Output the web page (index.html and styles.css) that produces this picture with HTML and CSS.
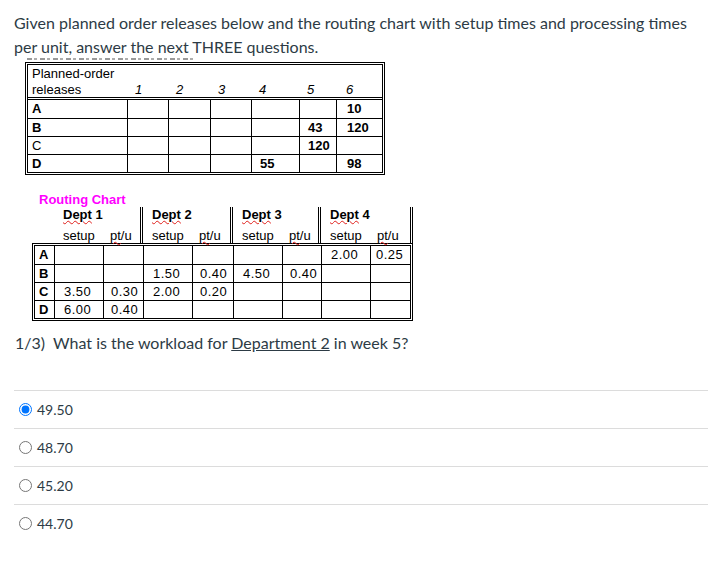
FILE: index.html
```html
<!DOCTYPE html>
<html lang="en">
<head>
<meta charset="utf-8">
<title>Question</title>
<link rel="stylesheet" href="styles.css">
</head>
<body>
<div class="page">
  <p class="intro">Given planned order releases below and the routing chart with setup times and processing times per unit, answer the next THREE questions.</p>
  <div class="cropline"></div>

  <div class="pot">
    <div class="h h0">Planned-order<br>releases</div>
    <div class="h">1</div>
    <div class="h">2</div>
    <div class="h">3</div>
    <div class="h">4</div>
    <div class="h">5</div>
    <div class="h c6">6</div>

    <div class="lab first">A</div>
    <div class="first"></div><div class="first"></div><div class="first"></div><div class="first"></div><div class="first"></div>
    <div class="first v c6">10</div>

    <div class="lab">B</div>
    <div></div><div></div><div></div><div></div>
    <div class="v">43</div>
    <div class="v c6">120</div>

    <div class="lab norm">C</div>
    <div></div><div></div><div></div><div></div>
    <div class="v">120</div>
    <div class="c6"></div>

    <div class="lab">D</div>
    <div></div><div></div><div></div>
    <div class="v">55</div>
    <div></div>
    <div class="v c6">98</div>
  </div>

  <div class="routing">
    <div class="rc-title">Routing Chart</div>
    <div class="rc-head">
      <div class="blank"></div>
      <div class="dept sep"><span class="sq">Dept</span> 1</div>
      <div class="dept sep"><span class="sq">Dept</span> 2</div>
      <div class="dept sep"><span class="sq">Dept</span> 3</div>
      <div class="dept"><span class="sq">Dept</span> 4</div>

      <div class="blank sub"></div>
      <div class="sub su">setup</div><div class="sub pt sep"><span class="sq">pt</span>/u</div>
      <div class="sub su">setup</div><div class="sub pt sep"><span class="sq">pt</span>/u</div>
      <div class="sub su">setup</div><div class="sub pt sep"><span class="sq">pt</span>/u</div>
      <div class="sub su">setup</div><div class="sub pt"><span class="sq">pt</span>/u</div>
    </div>
    <div class="rc-body">
      <div class="lab first">A</div>
      <div class="first su"></div><div class="first pt"></div>
      <div class="first su"></div><div class="first pt"></div>
      <div class="first su"></div><div class="first pt"></div>
      <div class="first su">2.00</div><div class="first pt r">0.25</div>

      <div class="lab">B</div>
      <div class="su"></div><div class="pt"></div>
      <div class="su">1.50</div><div class="pt">0.40</div>
      <div class="su">4.50</div><div class="pt">0.40</div>
      <div class="su"></div><div class="pt"></div>

      <div class="lab">C</div>
      <div class="su">3.50</div><div class="pt">0.30</div>
      <div class="su">2.00</div><div class="pt">0.20</div>
      <div class="su"></div><div class="pt"></div>
      <div class="su"></div><div class="pt"></div>

      <div class="lab">D</div>
      <div class="su">6.00</div><div class="pt">0.40</div>
      <div class="su"></div><div class="pt"></div>
      <div class="su"></div><div class="pt"></div>
      <div class="su"></div><div class="pt"></div>
    </div>
  </div>

  <p class="question">1/3)&nbsp; What is the workload for <u>Department 2</u> in week 5?</p>

  <div class="answers">
    <label class="answer"><input type="radio" name="q1" checked> 49.50</label>
    <label class="answer"><input type="radio" name="q1"> 48.70</label>
    <label class="answer"><input type="radio" name="q1"> 45.20</label>
    <label class="answer"><input type="radio" name="q1"> 44.70</label>
  </div>
</div>
</body>
</html>
```

FILE: styles.css
```css
body {
  margin: 0;
  background: #fff;
  font-family: Lato, "Noto Sans", sans-serif;
  color: #2d3b45;
}

.page {
  padding: 11px 13px 0 14px;
}

.intro {
  margin: 0;
  font-size: 16px;
  line-height: 24px;
}

.cropline {
  margin: -1px 0 0 13px;
  width: 168px;
  height: 2px;
  background: repeating-linear-gradient(90deg, #555 0 5px, transparent 5px 7px, #777 7px 10px, transparent 10px 13px);
  opacity: 0.6;
}

/* Planned-order releases table */
.pot {
  margin: 2px 0 0 11px;
  display: grid;
  grid-template-columns: 99px 41px 42px 41px 48px 37px 46px;
  width: max-content;
  border: 3px double #000;
  font-family: "Liberation Sans", Arial, sans-serif;
  font-size: 13px;
  line-height: 17px;
  color: #000;
}

.pot > div {
  box-sizing: border-box;
  height: 18px;
  border-left: 1px solid #000;
  border-top: 1px solid #000;
  padding-left: 8px;
  white-space: nowrap;
}

.pot > .first {
  border-top: 0;
  line-height: 18px;
}

.pot > .lab {
  border-left: 0;
  padding-left: 4px;
  font-weight: bold;
}

.pot > .lab.norm {
  font-weight: normal;
}

.pot > .h {
  height: 35px;
  border-top: 0;
  border-left: 0;
  border-bottom: 3px double #000;
  line-height: 16px;
  padding-top: 17px;
  font-style: italic;
}

.pot > .h0 {
  padding-top: 1px;
  padding-left: 4px;
  font-style: normal;
}

.pot > .v {
  font-weight: bold;
}

.pot > .c6 {
  padding-left: 10px;
}

/* Routing chart */
.routing {
  margin: 17px 0 0 18px;
  font-family: "Liberation Sans", Arial, sans-serif;
  font-size: 13px;
  color: #000;
}

.rc-title {
  margin-left: 7px;
  color: #ff00ff;
  font-weight: bold;
  line-height: 15px;
}

.rc-head,
.rc-body {
  display: grid;
  grid-template-columns: 19px 49px 40px 49px 41px 49px 39px 49px 40px;
  width: max-content;
}

.rc-head {
  border-left: 3px solid transparent;
  border-right: 3px double #000;
}

.rc-head > div {
  box-sizing: border-box;
  white-space: nowrap;
}

.rc-head > .dept {
  grid-column: span 2;
  height: 20px;
  line-height: 16px;
  padding-left: 9px;
  font-weight: bold;
}

.rc-head > .sub {
  height: 16px;
  line-height: 17px;
}

.rc-head > .su {
  padding-left: 9px;
}

.rc-head > .pt {
  padding-left: 7px;
}

.rc-head > .sep {
  border-right: 3px double #000;
}

.sq {
  text-decoration: underline wavy #e0201c;
  text-decoration-thickness: 1px;
  text-underline-offset: 1px;
}

.rc-body {
  border: 3px double #000;
}

.rc-body > div {
  box-sizing: border-box;
  height: 18px;
  line-height: 17px;
  border-left: 1px solid #000;
  border-top: 1px solid #000;
  letter-spacing: 0.5px;
  white-space: nowrap;
}

.rc-body > .first {
  border-top: 0;
  line-height: 18px;
}

.rc-body > .lab {
  border-left: 0;
  padding-left: 4px;
  font-weight: bold;
  letter-spacing: 0;
}

.rc-body > .su {
  padding-left: 9px;
}

.rc-body > .pt {
  padding-left: 7px;
}

.rc-body > .pt.r {
  padding-left: 5px;
}

/* Question */
.question {
  margin: 10px 0 0 1px;
  font-size: 16px;
  line-height: 24px;
}

.answers {
  margin-top: 35px;
}

.answer {
  box-sizing: border-box;
  height: 38px;
  border-top: 1px solid #dcdcdc;
  display: flex;
  align-items: center;
  font-size: 14px;
}

.answer input {
  margin: 0 5px 0 5px;
  width: 13px;
  height: 13px;
}
```
